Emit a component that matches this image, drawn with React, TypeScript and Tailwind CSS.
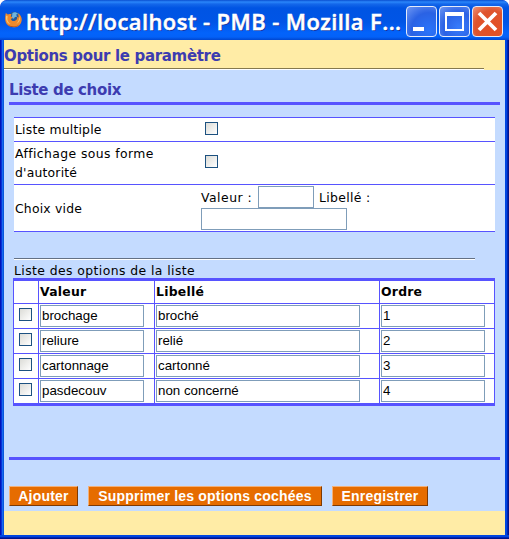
import React from 'react';

const rows = [
  ['brochage', 'broché', '1'],
  ['reliure', 'relié', '2'],
  ['cartonnage', 'cartonné', '3'],
  ['pasdecouv', 'non concerné', '4'],
];

function Check() {
  return (
    <span
      role="checkbox"
      aria-checked="false"
      className="block size-[13px] shrink-0 border border-[#1c5180] bg-linear-to-br from-[#dcdcd7] to-white"
    />
  );
}

function Field({ value = '', className }: { value?: string; className: string }) {
  return (
    <input
      defaultValue={value}
      className={`block h-[22px] shrink-0 border border-[#7f9db9] bg-white px-[1px] pb-[2px] font-['Liberation_Sans',Arial,sans-serif] text-[13.33px] text-black outline-none ${className}`}
    />
  );
}

function OrangeButton({ children, className }: { children: string; className: string }) {
  return (
    <button
      className={`h-5 shrink-0 border border-t-[#f3b078] border-r-[#7d3a05] border-b-[#7d3a05] border-l-[#f3b078] bg-[#e66c00] text-center font-['Liberation_Sans',Arial,sans-serif] text-[14px] leading-[18px] font-bold tracking-[0.2px] whitespace-nowrap text-white ${className}`}
    >
      {children}
    </button>
  );
}

function Firefox() {
  return (
    <svg viewBox="0 0 16 16" className="size-[17px] shrink-0">
      <circle cx="8.8" cy="7.2" r="6.4" fill="#235a9c" />
      <path d="M7 1.8c2-1 4-.5 5.3 1l-1.8.6.8 2-2 .3-.9 1.7-2-.7z" fill="#6fb4de" />
      <path
        d="M.8 1.8 2.6 3.4c1-.8 2.4-.8 3.5-.3L5.4 5l2 1.2-1.8 1.4c.2 1.8 2.6 2.5 4.2 1.4 1.3-.8 2-2 1.6-3.6l1.5.8-.6-4.2c2.8 1.8 3.8 4.6 3.3 7.4-.8 3.8-4 6.2-7.8 6C3.6 15.2.5 12.2.2 8.3 0 6 .2 3.6.8 1.8z"
        fill="#ee8a2c"
      />
      <path d="M1 4.2 2.6 5.1c-1 2.8.1 5.8 3 7.2C2.4 12 .4 9.4 1 4.2zM13.8 5c1 2.8-.2 6-3.1 7.2 1.6-1.6 2.7-4 3.1-7.2z" fill="#fbc66b" />
      <path d="M1.9 12c2.7 3 8.2 3.4 11.4.6-2.2 3.3-8.8 3.7-11.4-.6z" fill="#a93f16" />
    </svg>
  );
}

function CaptionButton({ children, className }: { children: React.ReactNode; className: string }) {
  return (
    <button className={`h-[31px] w-[31px] shrink-0 overflow-hidden rounded-[4px] border border-[#e4ebfa] ${className}`}>
      <svg viewBox="0 0 29 29" className="block size-[29px]">
        {children}
      </svg>
    </button>
  );
}

function TitleBar() {
  return (
    <header className="flex h-10 shrink-0 items-start rounded-t-[7px] bg-[linear-gradient(180deg,#0a4fd0_0,#2a86fb_2px,#1467ea_4px,#0054e3_8px,#0055e6_22px,#0363fb_33px,#0361f8_37px,#0046cf_40px)] pt-[5px] pr-[3px] pl-[5px]">
      <div className="pt-[6px]">
        <Firefox />
      </div>
      <h1 className="ml-[4px] w-[380px] font-['Open_Sans','Noto_Sans',sans-serif] text-[22px] leading-[32px] font-semibold tracking-[0.4px] whitespace-nowrap text-white [-webkit-text-stroke:0.5px_white] [text-shadow:1px_1px_0_#10309a]">
        http://localhost - PMB - Mozilla F...
      </h1>
      <div className="mt-px flex gap-[2px]">
        <CaptionButton className="bg-[radial-gradient(circle_at_75%_80%,#2a74fa_0,#2a62e4_55%,#6e97f3_100%)]">
          <path d="M6 20h11v4H6z" fill="white" />
        </CaptionButton>
        <CaptionButton className="bg-[radial-gradient(circle_at_65%_70%,#387cfb_0,#2b62e5_55%,#6e97f3_100%)]">
          <path d="M5 5h19v19H5zM7 9v13h15V9z" fill="white" fillRule="evenodd" />
        </CaptionButton>
        <CaptionButton className="bg-[radial-gradient(circle_at_65%_70%,#e34f22_0,#df542d_60%,#ed9278_100%)]">
          <path d="m6 6 17 17M23 6 6 23" stroke="white" strokeWidth="3.8" />
        </CaptionButton>
      </div>
    </header>
  );
}

function ParameterTable() {
  return (
    <section className="mt-3 ml-[10px] flex h-[115px] w-[481px] flex-col border-y border-[#5753ff] bg-white leading-[19px]">
      <div className="flex h-[24px] items-center border-b border-[#5753ff] pl-px">
        <span className="w-[190px] tracking-[0.2px]">Liste multiple</span>
        <div className="pb-[2px]"><Check /></div>
      </div>
      <div className="flex h-[43px] items-center border-b border-[#5753ff] pl-px">
        <span className="w-[190px] tracking-[0.4px]">Affichage sous forme<br /><span className="tracking-[0.2px]">d'autorité</span></span>
        <div className="pb-[4px]"><Check /></div>
      </div>
      <div className="flex flex-1 items-center pl-px">
        <span className="w-[186px] pt-px tracking-[0.2px]">Choix vide</span>
        <div className="flex flex-col">
          <div className="flex items-center">
            <span className="w-[57px] tracking-[0.5px]">Valeur :</span>
            <Field className="w-[56px]" />
            <span className="ml-[5px] tracking-[0.35px]">Libellé :</span>
          </div>
          <Field className="w-[146px]" />
        </div>
      </div>
    </section>
  );
}

function OptionsTable() {
  const grid = 'grid grid-cols-[25px_116px_225px_114px] divide-x divide-[#5753ff]';
  return (
    <section className="ml-[9px] h-[128px] w-[482px] border-x border-y-[3px] border-[#5753ff] bg-white">
      <div className={`${grid} h-[22px] leading-[21px] font-bold tracking-[0.25px]`}>
        <span />
        <span className="pl-px">Valeur</span>
        <span className="pl-px">Libellé</span>
        <span className="pl-px">Ordre</span>
      </div>
      {rows.map(([value, label, order]) => (
        <div key={value} className={`${grid} h-[25px] border-t border-[#5753ff]`}>
          <div className="pt-1 pl-[5px]"><Check /></div>
          <div className="pt-px pl-px"><Field value={value} className="w-[104px]" /></div>
          <div className="pt-px pl-px"><Field value={label} className="w-[204px]" /></div>
          <div className="pt-px pl-px"><Field value={order} className="w-[104px]" /></div>
        </div>
      ))}
    </section>
  );
}

export default function App() {
  return (
    <div className="h-[539px] w-[509px] bg-white font-['DejaVu_Sans',Verdana,sans-serif] text-[12.4px] text-black">
      <div className="flex h-full flex-col overflow-hidden rounded-t-[7px] bg-[#0831d9]">
        <TitleBar />
        <div className="flex flex-1 flex-col bg-[linear-gradient(90deg,#0014b8_0_1px,#0831d9_1px_2px,#166aee_2px_3px,#0855dd_3px_4px,#0046e0_4px_507px,#0024b4_507px_508px,#00138c_508px)] px-1">
          <main className="flex h-[495px] shrink-0 flex-col bg-[#ffeca6]">
            <h2 className="h-[28px] pt-[6px] text-[15px] leading-[20px] font-bold tracking-[-0.33px] whitespace-nowrap text-[#3d3cb0]">Options pour le paramètre</h2>
            <div className="h-[2px] w-[480px] shrink-0 border-t border-b border-t-[#85794f] border-b-white" />
            <div className="flex h-[441px] shrink-0 flex-col bg-[#c4dbff]">
              <h3 className="h-[32px] pt-[10px] pl-[5px] text-[15px] leading-[20px] font-bold tracking-[-0.36px] text-[#3d3cb0]">Liste de choix</h3>
              <div className="ml-[5px] h-[3px] w-[491px] shrink-0 bg-[#5753ff]" />
              <ParameterTable />
              <div className="mt-[26px] ml-[10px] h-[2px] w-[461px] shrink-0 border-t border-b border-t-[#647185] border-b-white" />
              <p className="ml-[10px] h-[18px] leading-[21px] tracking-[0.42px]">Liste des options de la liste</p>
              <OptionsTable />
              <div className="mt-[51px] ml-[5px] h-[3px] w-[491px] shrink-0 bg-[#5753ff]" />
              <div className="mt-[26px] ml-[5px] flex">
                <OrangeButton className="w-[69px]">Ajouter</OrangeButton>
                <OrangeButton className="ml-[10px] w-[234px]">Supprimer les options cochées</OrangeButton>
                <OrangeButton className="ml-[10px] w-[96px]">Enregistrer</OrangeButton>
              </div>
            </div>
          </main>
          <div className="-mx-1 h-1 shrink-0 bg-[linear-gradient(180deg,#0046e0_0_2px,#0024b4_2px_3px,#00138c_3px)]" />
        </div>
      </div>
    </div>
  );
}
